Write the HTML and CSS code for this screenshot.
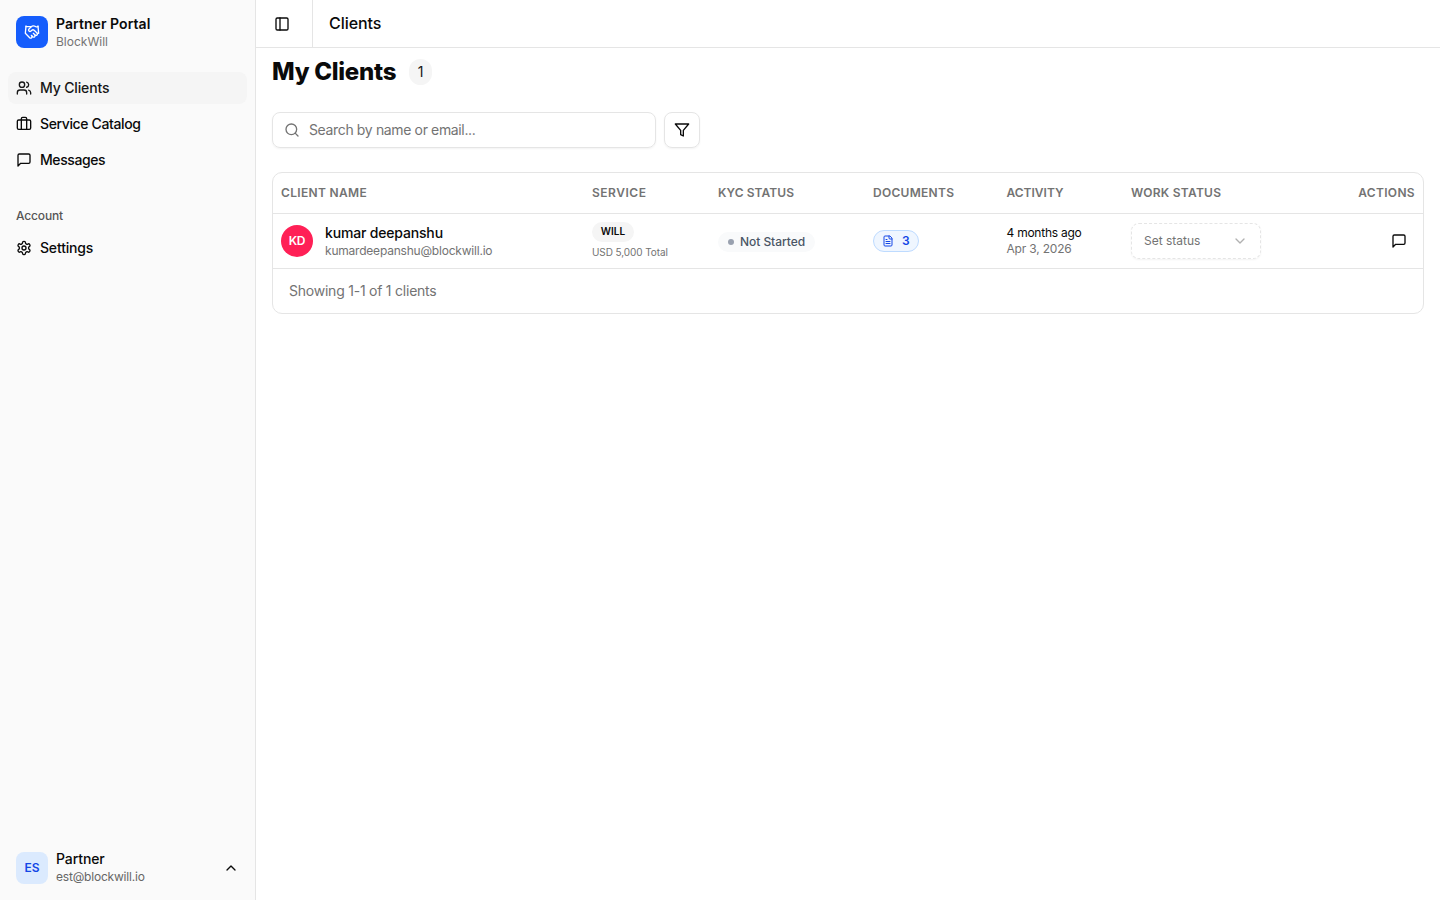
FILE: index.html
```html
<!DOCTYPE html>
<html lang="en">
<head>
<meta charset="utf-8">
<title>Clients</title>
<link rel="stylesheet" href="styles.css">
</head>
<body>
<div class="app">
  <aside class="sidebar">
    <div class="brand">
      <span class="brand-logo"><svg class="icon" viewBox="0 0 24 24"><path d="m11 17 2 2a1 1 0 1 0 3-3"/><path d="m14 14 2.5 2.5a1 1 0 1 0 3-3l-3.88-3.88a3 3 0 0 0-4.24 0l-.88.88a1 1 0 1 1-3-3l2.81-2.81a5.79 5.79 0 0 1 7.06-.87l.47.28a2 2 0 0 0 1.42.25L21 4"/><path d="m21 3 1 11h-2"/><path d="M3 3 2 14l6.5 6.5a1 1 0 1 0 3-3"/><path d="M3 4h8"/></svg></span>
      <div class="stack"><span class="brand-name">Partner Portal</span><span class="brand-sub">BlockWill</span></div>
    </div>
    <nav class="nav">
      <a class="nav-item active"><svg class="icon" viewBox="0 0 24 24"><path d="M16 21v-2a4 4 0 0 0-4-4H6a4 4 0 0 0-4 4v2"/><circle cx="9" cy="7" r="4"/><path d="M22 21v-2a4 4 0 0 0-3-3.87"/><path d="M16 3.13a4 4 0 0 1 0 7.75"/></svg><span class="t-clients">My Clients</span></a>
      <a class="nav-item"><svg class="icon" viewBox="0 0 24 24"><rect x="2" y="6" width="20" height="14" rx="2"/><path d="M16 20V4a2 2 0 0 0-2-2h-4a2 2 0 0 0-2 2v16"/></svg><span class="t-catalog">Service Catalog</span></a>
      <a class="nav-item"><svg class="icon" viewBox="0 0 24 24"><path d="M21 15a2 2 0 0 1-2 2H7l-4 4V5a2 2 0 0 1 2-2h14a2 2 0 0 1 2 2z"/></svg><span class="t-messages">Messages</span></a>
    </nav>
    <div class="nav-label">Account</div>
    <nav class="nav account">
      <a class="nav-item"><svg class="icon" viewBox="0 0 24 24"><path d="M12.22 2h-.44a2 2 0 0 0-2 2v.18a2 2 0 0 1-1 1.73l-.43.25a2 2 0 0 1-2 0l-.15-.08a2 2 0 0 0-2.73.73l-.22.38a2 2 0 0 0 .73 2.73l.15.1a2 2 0 0 1 1 1.72v.51a2 2 0 0 1-1 1.74l-.15.09a2 2 0 0 0-.73 2.73l.22.38a2 2 0 0 0 2.73.73l.15-.08a2 2 0 0 1 2 0l.43.25a2 2 0 0 1 1 1.73V20a2 2 0 0 0 2 2h.44a2 2 0 0 0 2-2v-.18a2 2 0 0 1 1-1.73l.43-.25a2 2 0 0 1 2 0l.15.08a2 2 0 0 0 2.73-.73l.22-.39a2 2 0 0 0-.73-2.73l-.15-.08a2 2 0 0 1-1-1.74v-.5a2 2 0 0 1 1-1.74l.15-.09a2 2 0 0 0 .73-2.73l-.22-.38a2 2 0 0 0-2.73-.73l-.15.08a2 2 0 0 1-2 0l-.43-.25a2 2 0 0 1-1-1.73V4a2 2 0 0 0-2-2z"/><circle cx="12" cy="12" r="3"/></svg><span class="t-settings">Settings</span></a>
    </nav>
    <div class="user">
      <span class="user-avatar">ES</span>
      <div class="stack"><span class="user-name">Partner</span><span class="user-mail">est@blockwill.io</span></div>
      <svg class="icon user-chevron" viewBox="0 0 24 24"><path d="m18 15-6-6-6 6"/></svg>
    </div>
  </aside>
  <div class="main">
    <header class="topbar">
      <div class="toggle"><svg class="icon" viewBox="0 0 24 24"><rect x="3" y="3" width="18" height="18" rx="2"/><path d="M9 3v18"/></svg></div>
      <span class="crumb">Clients</span>
    </header>
    <main class="content">
      <div class="title-row"><h1 class="title">My Clients</h1><span class="count">1</span></div>
      <div class="tools">
        <div class="search"><svg class="icon" viewBox="0 0 24 24"><circle cx="11" cy="11" r="8"/><path d="m21 21-4.3-4.3"/></svg><span class="placeholder">Search by name or email...</span></div>
        <div class="filter"><svg class="icon" viewBox="0 0 24 24"><path d="M22 3H2l8 9.46V19l4 2v-8.54z"/></svg></div>
      </div>
      <section class="card">
        <table class="table">
          <colgroup><col class="c-name"><col class="c-service"><col class="c-kyc"><col class="c-docs"><col class="c-activity"><col class="c-work"><col></colgroup>
          <thead><tr><th><span class="h-name">Client Name</span></th><th><span class="h-service">Service</span></th><th><span class="h-kyc">KYC Status</span></th><th><span class="h-docs">Documents</span></th><th><span class="h-activity">Activity</span></th><th><span class="h-work">Work Status</span></th><th class="right"><span class="h-actions">Actions</span></th></tr></thead>
          <tbody><tr>
            <td><div class="client"><span class="avatar">KD</span><div class="stack"><span class="client-name">kumar deepanshu</span><span class="client-mail">kumardeepanshu@blockwill.io</span></div></div></td>
            <td><div class="service"><span class="tag">WILL</span><span class="price">USD 5,000 Total</span></div></td>
            <td><span class="kyc"><i class="dot"></i><span class="kyc-text">Not Started</span></span></td>
            <td><span class="docs"><svg class="icon" viewBox="0 0 24 24"><path d="M15 2H6a2 2 0 0 0-2 2v16a2 2 0 0 0 2 2h12a2 2 0 0 0 2-2V7z"/><path d="M14 2v4a2 2 0 0 0 2 2h4"/><path d="M10 9H8"/><path d="M16 13H8"/><path d="M16 17H8"/></svg>3</span></td>
            <td><div class="activity"><span class="ago">4 months ago</span><span class="date">Apr 3, 2026</span></div></td>
            <td><div class="select"><span class="select-text">Set status</span><svg class="icon" viewBox="0 0 24 24"><path d="m6 9 6 6 6-6"/></svg></div></td>
            <td><div class="action"><svg class="icon" viewBox="0 0 24 24"><path d="M21 15a2 2 0 0 1-2 2H7l-4 4V5a2 2 0 0 1 2-2h14a2 2 0 0 1 2 2z"/></svg></div></td>
          </tr></tbody>
        </table>
        <div class="card-foot"><span class="showing">Showing 1-1 of 1 clients</span></div>
      </section>
    </main>
  </div>
</div>
</body>
</html>
```
FILE: styles.css
```css
* { box-sizing: border-box; }
body { margin: 0; font-family: Inter, "Liberation Sans", sans-serif; font-size: 14px; line-height: 20px; color: #0a0a0a; background: #fff; white-space: nowrap; }
.app { display: flex; height: 900px; overflow: hidden; }
.icon { width: 16px; height: 16px; flex: none; display: block; fill: none; stroke: currentColor; stroke-width: 2; stroke-linecap: round; stroke-linejoin: round; }
.stack { display: flex; flex-direction: column; align-items: flex-start; }

.sidebar { width: 256px; flex: none; display: flex; flex-direction: column; background: #fafafa; border-right: 1px solid #e5e5e5; }
.brand { display: flex; align-items: center; gap: 8px; height: 32px; margin: 16px 16px 24px; }
.brand .stack { padding-top: 2px; }
.brand-logo { width: 32px; height: 32px; border-radius: 8px; background: #155dfc; color: #fff; display: grid; place-items: center; }
.brand-name { font-weight: 600; line-height: 18px; letter-spacing: .06px; }
.brand-sub { font-size: 12px; line-height: 18px; color: #737373; }
.nav { display: flex; flex-direction: column; gap: 4px; padding: 0 8px; }
.nav-item { display: flex; align-items: center; gap: 8px; height: 32px; padding: 0 8px; border-radius: 8px; font-weight: 500; }
.nav-item.active { background: #f5f5f5; color: #171717; }
.t-clients { letter-spacing: -.15px; }
.t-catalog { letter-spacing: -.37px; }
.t-messages { letter-spacing: -.42px; }
.t-settings { letter-spacing: -.17px; }
.nav-label { margin: 24px 16px 0; height: 32px; line-height: 32px; font-size: 12px; font-weight: 500; color: #555; letter-spacing: -.15px; }
.user { display: flex; align-items: center; gap: 8px; margin: auto 16px 16px; height: 32px; }
.user-avatar { width: 32px; height: 32px; border-radius: 8px; background: #dbeafe; color: #1447e6; font-size: 12px; font-weight: 600; display: grid; place-items: center; }
.user-name { font-weight: 500; line-height: 18px; letter-spacing: -.1px; }
.user-mail { font-size: 12px; line-height: 18px; color: #666; letter-spacing: -.2px; }
.user-chevron { margin-left: auto; }

.main { flex: 1; min-width: 0; }
.topbar { display: flex; align-items: center; height: 48px; border-bottom: 1px solid #e5e5e5; }
.toggle { width: 57px; height: 47px; display: flex; align-items: center; padding-left: 18px; border-right: 1px solid #e5e5e5; }
.crumb { margin-left: 16px; padding-bottom: 1px; font-size: 16px; font-weight: 500; letter-spacing: -.05px; }
.content { padding: 8px 16px; }
.title-row { display: flex; align-items: center; gap: 13px; height: 32px; }
.title { margin: 0; font-size: 24px; line-height: 32px; font-weight: 800; letter-spacing: -.27px; }
.count { width: 23px; height: 26px; border-radius: 13px; background: #f5f5f5; text-align: center; line-height: 26px; color: #171717; }
.tools { display: flex; gap: 8px; margin-top: 24px; }
.search { width: 384px; height: 36px; display: flex; align-items: center; gap: 9px; padding-left: 11px; border: 1px solid #e5e5e5; border-radius: 8px; color: #737373; box-shadow: 0 1px 2px rgba(0,0,0,.05); }
.placeholder { letter-spacing: -.36px; }
.filter { width: 36px; height: 36px; display: grid; place-items: center; border: 1px solid #e5e5e5; border-radius: 8px; box-shadow: 0 1px 2px rgba(0,0,0,.05); }

.card { margin-top: 24px; border: 1px solid #e5e5e5; border-radius: 10px; overflow: hidden; }
.table { width: 100%; table-layout: fixed; border-collapse: separate; border-spacing: 0; }
.c-name { width: 311px; }
.c-service { width: 126px; }
.c-kyc { width: 155px; }
.c-docs { width: 133.5px; }
.c-activity { width: 124.5px; }
.c-work { width: 146px; }
.table th { height: 41px; padding: 0 8px 1px; text-align: left; font-size: 12px; line-height: 16px; font-weight: 600; text-transform: uppercase; color: #737373; border-bottom: 1px solid #e5e5e5; }
.table td { height: 55px; padding: 0 8px; vertical-align: middle; border-bottom: 1px solid #e5e5e5; }
.table .right { text-align: right; }
.h-name { letter-spacing: .33px; }
.h-service { letter-spacing: .52px; }
.h-kyc { letter-spacing: .08px; }
.h-docs { letter-spacing: .28px; }
.h-work { letter-spacing: .25px; }
.h-actions { letter-spacing: .33px; }
.client { display: flex; align-items: center; gap: 12px; }
.avatar { width: 32px; height: 32px; border-radius: 50%; background: #ff2056; color: #fff; font-size: 12px; font-weight: 600; letter-spacing: -.3px; display: grid; place-items: center; }
.client-name { font-weight: 500; line-height: 18px; letter-spacing: -.17px; }
.client-mail { font-size: 12px; line-height: 17px; color: #737373; letter-spacing: -.21px; }
.service { display: flex; flex-direction: column; align-items: flex-start; gap: 3px; }
.tag { width: 42px; height: 20px; border-radius: 10px; background: #f5f5f5; font-size: 10px; line-height: 19px; font-weight: 600; text-align: center; }
.price { font-size: 10px; line-height: 15px; color: #737373; letter-spacing: -.08px; }
.kyc { display: flex; align-items: center; gap: 6px; width: 97px; height: 20px; margin-top: 2px; padding-left: 10px; border-radius: 10px; background: #f9fafb; color: #4a5565; font-size: 12px; font-weight: 500; }
.kyc-text { letter-spacing: -.05px; }
.dot { width: 6px; height: 6px; border-radius: 50%; background: #99a1af; }
.docs { display: flex; align-items: center; gap: 8px; width: 46px; height: 22px; padding-left: 8px; border: 1px solid #bedbff; border-radius: 11px; background: #eff6ff; color: #1447e6; font-size: 12px; font-weight: 600; }
.docs .icon { width: 12px; height: 12px; }
.activity { display: flex; flex-direction: column; align-items: flex-start; font-size: 12px; line-height: 16px; }
.ago { letter-spacing: -.24px; }
.date { color: #737373; letter-spacing: -.19px; }
.select { display: flex; align-items: center; justify-content: space-between; width: 130px; height: 36px; padding: 0 12px; border: 1px dashed #e5e5e5; border-radius: 8px; font-size: 12px; color: #737373; box-shadow: 0 1px 2px rgba(0,0,0,.05); }
.select .icon { opacity: .55; }
.action { display: flex; justify-content: flex-end; padding-right: 8px; }
.card-foot { height: 44px; padding: 0 16px; line-height: 44px; color: #737373; }
.showing { letter-spacing: -.23px; }
```
